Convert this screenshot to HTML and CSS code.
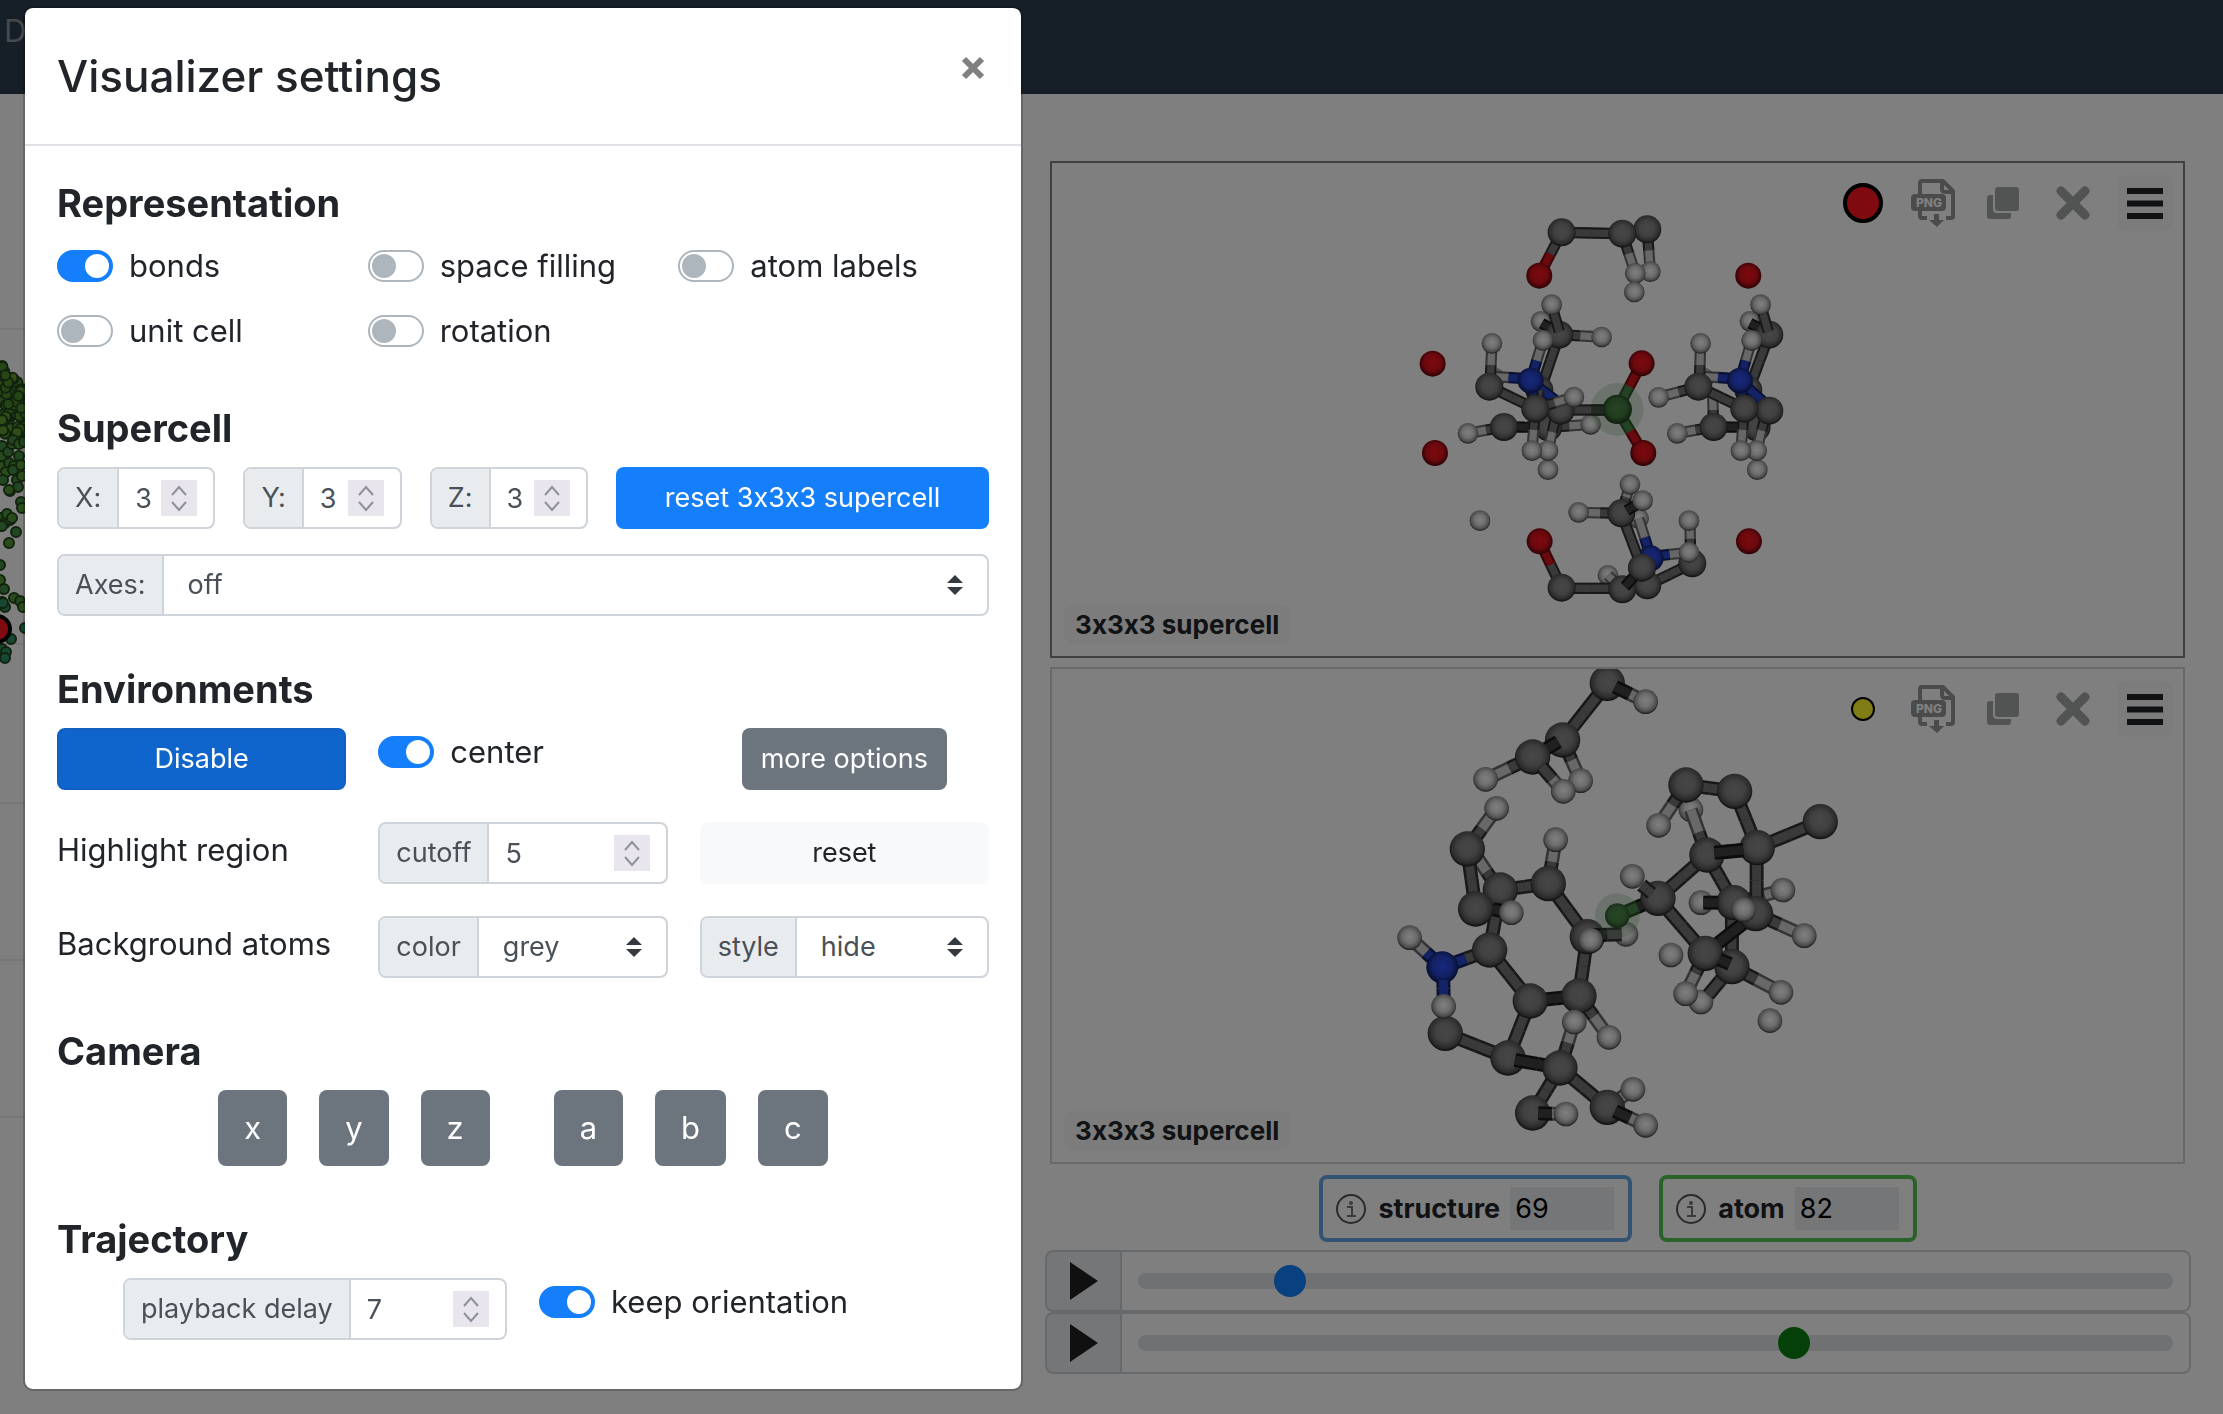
FILE: index.html
```html
<!DOCTYPE html>
<html lang="en">
<head>
<meta charset="utf-8">
<title>Visualizer settings</title>
<link rel="stylesheet" href="styles.css">
</head>
<body>
<svg class="defs" aria-hidden="true">
  <defs>
    <radialGradient id="atom-C" cx=".5" cy=".46" r=".54"><stop offset="0" stop-color="#8e8e8e"/><stop offset=".5" stop-color="#828282"/><stop offset=".82" stop-color="#585858"/><stop offset="1" stop-color="#1c1c1c"/></radialGradient>
    <radialGradient id="atom-H" cx=".5" cy=".46" r=".54"><stop offset="0" stop-color="#fff"/><stop offset=".5" stop-color="#dcdcdc"/><stop offset=".82" stop-color="#989898"/><stop offset="1" stop-color="#383838"/></radialGradient>
    <radialGradient id="atom-O" cx=".5" cy=".46" r=".54"><stop offset="0" stop-color="#f81420"/><stop offset=".6" stop-color="#d8121c"/><stop offset="1" stop-color="#540408"/></radialGradient>
    <radialGradient id="atom-N" cx=".5" cy=".46" r=".54"><stop offset="0" stop-color="#3050f8"/><stop offset=".6" stop-color="#2644cc"/><stop offset="1" stop-color="#0c1850"/></radialGradient>
    <radialGradient id="atom-G" cx=".5" cy=".46" r=".54"><stop offset="0" stop-color="#4c8a48"/><stop offset=".6" stop-color="#42783e"/><stop offset="1" stop-color="#1c381a"/></radialGradient>
    <symbol id="icon-png" viewBox="0 0 44 48">
      <path d="M9 15V4q0-2 2-2h21l10 10v25q0 2-2 2h-5M9 32v5q0 2 2 2h5M31 2v8q0 3 3 3h8" fill="none" stroke="#969696" stroke-width="4"/>
      <rect x="0" y="15" width="35" height="17" rx="4" fill="#969696"/>
      <text x="18" y="28" text-anchor="middle" class="png-text">PNG</text>
      <path d="M23 35h5v6h5l-7 7-8-7h5z" fill="#969696"/>
    </symbol>
    <symbol id="icon-copy" viewBox="0 0 32 32">
      <path d="M6 8v14q0 4 4 4h14v3q0 3-3 3H3q-3 0-3-3V11q0-3 3-3z" fill="#a2a8a6"/>
      <rect x="8" y="0" width="24" height="24" rx="3" fill="#a2a8a6"/>
    </symbol>
    <symbol id="icon-remove" viewBox="0 0 34 34">
      <path d="M5 5l24 24M29 5L5 29" stroke="#a2a8a6" stroke-width="7" stroke-linecap="square"/>
      <path d="M5 5l24 24M29 5L5 29" stroke="#a2a8a6" stroke-width="9" stroke-linecap="round"/>
    </symbol>
    <symbol id="icon-menu" viewBox="0 0 36 31">
      <path d="M0 3h36M0 15.500h36M0 28h36" stroke="#212529" stroke-width="6"/>
    </symbol>
    <symbol id="icon-info" viewBox="0 0 30 30">
      <circle cx="15" cy="15" r="14" fill="none" stroke="#555" stroke-width="2"/>
      <path d="M11 13h5v9M11 22h9" fill="none" stroke="#777" stroke-width="2"/>
      <circle cx="15" cy="9" r="2" fill="#777"/>
    </symbol>
    <symbol id="icon-play" viewBox="0 0 28 38"><path d="M0 0l28 19L0 38z" fill="#202020"/></symbol>
    <symbol id="icon-spin" viewBox="0 0 36 36">
      <path d="M11 15l7-8 7 8M11 22l7 8 7-8" fill="none" stroke="#8f8f9d" stroke-width="2"/>
    </symbol>
  </defs>
</svg>

<nav class="navbar"><a class="nav-link" href="#">D</a></nav>

<main class="page">
  <section class="map" aria-label="Map">
    <svg class="map-plot" id="map"></svg>
  </section>

  <section class="explorer">
    <div class="viewers">
      <div class="viewer is-active">
        <svg class="canvas" id="mol-1" viewBox="0 0 1131 493" preserveAspectRatio="xMidYMid meet"></svg>
        <div class="tools">
          <span class="marker-slot"><span class="marker marker-big"></span></span>
          <button class="tool" aria-label="Save as PNG"><svg width="44" height="48"><use href="#icon-png"/></svg></button>
          <button class="tool" aria-label="Duplicate"><svg width="32" height="32"><use href="#icon-copy"/></svg></button>
          <button class="tool" aria-label="Remove"><svg width="34" height="34"><use href="#icon-remove"/></svg></button>
          <button class="tool tool-menu" aria-label="Settings"><svg width="36" height="31"><use href="#icon-menu"/></svg></button>
        </div>
        <span class="cell-badge">3x3x3 supercell</span>
      </div>
      <div class="viewer">
        <svg class="canvas" id="mol-2" viewBox="0 0 1131 493" preserveAspectRatio="xMidYMid meet"></svg>
        <div class="tools">
          <span class="marker-slot"><span class="marker marker-small"></span></span>
          <button class="tool" aria-label="Save as PNG"><svg width="44" height="48"><use href="#icon-png"/></svg></button>
          <button class="tool" aria-label="Duplicate"><svg width="32" height="32"><use href="#icon-copy"/></svg></button>
          <button class="tool" aria-label="Remove"><svg width="34" height="34"><use href="#icon-remove"/></svg></button>
          <button class="tool tool-menu" aria-label="Settings"><svg width="36" height="31"><use href="#icon-menu"/></svg></button>
        </div>
        <span class="cell-badge">3x3x3 supercell</span>
      </div>
    </div>

    <div class="infos">
      <div class="info info-structure">
        <svg width="30" height="30"><use href="#icon-info"/></svg>
        <label for="structure">structure</label>
        <input id="structure" type="text" value="69">
      </div>
      <div class="info info-atom">
        <svg width="30" height="30"><use href="#icon-info"/></svg>
        <label for="atom">atom</label>
        <input id="atom" type="text" value="82">
      </div>
    </div>

    <div class="players">
      <div class="player">
        <button class="play" aria-label="Play structures"><svg width="28" height="38"><use href="#icon-play"/></svg></button>
        <div class="track"><input class="range range-structure" type="range" min="0" max="1000" value="136" aria-label="Structure"></div>
      </div>
      <div class="player">
        <button class="play" aria-label="Play atoms"><svg width="28" height="38"><use href="#icon-play"/></svg></button>
        <div class="track"><input class="range range-atom" type="range" min="0" max="1000" value="638" aria-label="Atom"></div>
      </div>
    </div>
  </section>
</main>

<div class="backdrop">
  <div class="modal" role="dialog" aria-labelledby="modal-title">
    <header class="modal-header">
      <h4 class="modal-title" id="modal-title">Visualizer settings</h4>
      <button class="close" aria-label="Close"><svg width="24" height="24" viewBox="0 0 24 24"><path d="M3 3l18 18M21 3L3 21" stroke="#7f7f7f" stroke-width="6"/></svg></button>
    </header>
    <div class="modal-body">
      <section class="group">
        <h5 class="heading">Representation</h5>
        <div class="switches">
          <label class="switch"><input type="checkbox" checked>bonds</label>
          <label class="switch"><input type="checkbox">space filling</label>
          <label class="switch"><input type="checkbox">atom labels</label>
          <label class="switch"><input type="checkbox">unit cell</label>
          <label class="switch"><input type="checkbox">rotation</label>
        </div>
      </section>

      <section class="group">
        <h5 class="heading">Supercell</h5>
        <div class="supercell">
          <div class="field"><label class="addon" for="sx">X:</label><input class="number" id="sx" type="number" value="3"><svg class="spin" width="36" height="36"><use href="#icon-spin"/></svg></div>
          <div class="field"><label class="addon" for="sy">Y:</label><input class="number" id="sy" type="number" value="3"><svg class="spin" width="36" height="36"><use href="#icon-spin"/></svg></div>
          <div class="field"><label class="addon" for="sz">Z:</label><input class="number" id="sz" type="number" value="3"><svg class="spin" width="36" height="36"><use href="#icon-spin"/></svg></div>
          <button class="btn btn-primary reset-cell">reset 3x3x3 supercell</button>
        </div>
        <div class="field axes"><label class="addon" for="axes">Axes:</label><select class="select" id="axes"><option>off</option></select></div>
      </section>

      <section class="group">
        <h5 class="heading">Environments</h5>
        <div class="environments">
          <button class="btn btn-active">Disable</button>
          <label class="switch"><input type="checkbox" checked>center</label>
          <button class="btn btn-secondary more">more options</button>
          <span class="row-label">Highlight region</span>
          <div class="field"><label class="addon" for="cutoff">cutoff</label><input class="number" id="cutoff" type="number" value="5"><svg class="spin" width="36" height="36"><use href="#icon-spin"/></svg></div>
          <button class="btn btn-light">reset</button>
          <span class="row-label">Background atoms</span>
          <div class="field"><label class="addon" for="color">color</label><select class="select" id="color"><option>grey</option></select></div>
          <div class="field"><label class="addon" for="style">style</label><select class="select" id="style"><option>hide</option></select></div>
        </div>
      </section>

      <section class="group">
        <h5 class="heading">Camera</h5>
        <div class="camera">
          <div class="axis-set"><button class="axis">x</button><button class="axis">y</button><button class="axis">z</button></div>
          <div class="axis-set"><button class="axis">a</button><button class="axis">b</button><button class="axis">c</button></div>
        </div>
      </section>

      <section class="group">
        <h5 class="heading">Trajectory</h5>
        <div class="trajectory">
          <div class="field playback"><label class="addon" for="delay">playback delay</label><input class="number" id="delay" type="number" value="7"><svg class="spin" width="36" height="36"><use href="#icon-spin"/></svg></div>
          <label class="switch"><input type="checkbox" checked>keep orientation</label>
        </div>
      </section>
    </div>
  </div>
</div>
<script src="scene.js"></script>
</body>
</html>
```
FILE: styles.css
```css
*, *::before, *::after { box-sizing: border-box; }

body {
  margin: 0;
  background: #fff;
  color: #212529;
  font-family: Inter, "Liberation Sans", sans-serif;
  font-size: 31px;
  font-feature-settings: "calt" 0;
  line-height: 48px;
}

button, input, select { font: inherit; font-feature-settings: inherit; color: inherit; margin: 0; }
button { cursor: pointer; border: 0; padding: 0; background: none; }
svg { display: block; flex: none; }
.defs { position: absolute; width: 0; height: 0; }
.png-text { font: 800 12px Inter, sans-serif; fill: #fff; }

.navbar { height: 94px; padding: 7px 4px; background: #2c3e50; }
.nav-link { color: #8e9296; text-decoration: none; }

.page {
  display: grid;
  grid-template-columns: 47.7% 1fr;
  padding-right: 32px;
}
.map { min-width: 0; overflow: hidden; }
.map-plot { width: 100%; height: 1320px; }

/* Structure viewers */
.explorer { padding-top: 67px; min-width: 0; }
.viewers { display: grid; gap: 9px; margin: 0 6px 0 5px; }
.viewer { position: relative; height: 497px; border: 2px solid #d3d3d3; overflow: hidden; }
.viewer.is-active { border-color: #808080; }
.canvas { width: 100%; height: 100%; }
.tools {
  position: absolute;
  top: 12px;
  right: 10px;
  display: flex;
  align-items: center;
  gap: 14px;
}
.tool, .marker-slot {
  display: flex;
  align-items: center;
  justify-content: center;
  width: 56px;
  height: 56px;
  border-radius: 8px;
}
.tool-menu { background: #f8f9fa; margin-left: 2px; }
.marker { border: 4px solid #000; border-radius: 50%; }
.marker-big { width: 40px; height: 40px; background: #ff1420; }
.marker-small { width: 24px; height: 24px; border-width: 2px; background: #fffa28; }
.cell-badge {
  position: absolute;
  left: 12px;
  bottom: 12px;
  padding: 0 11px;
  border-radius: 8px;
  background: #f8f9fa;
  font-size: 26px;
  font-weight: 700;
  line-height: 39px;
}

/* Selected structure and atom */
.infos { display: flex; justify-content: center; gap: 27px; margin: 11px 0 8px; }
.info {
  display: flex;
  align-items: center;
  height: 67px;
  padding: 0 14px 0 13px;
  border: 4px solid #66a6e6;
  border-radius: 8px;
  font-size: 27px;
}
.info-atom { border-color: #52c652; }
.info label { margin: 0 10px 0 12px; font-weight: 700; }
.info input {
  width: 104px;
  height: 43px;
  padding: 0 5px;
  border: 0;
  background: #e9ecef;
  color: #000;
}

.player { display: flex; height: 62px; }
.play {
  display: flex;
  align-items: center;
  justify-content: center;
  width: 77px;
  background: #e9ecef;
  border: 2px solid #ced4da;
  border-radius: 8px 0 0 8px;
}
.track {
  flex: 1;
  display: flex;
  align-items: center;
  padding: 0 16px;
  border: 2px solid #ced4da;
  border-left: 0;
  border-radius: 0 8px 8px 0;
}
.range { appearance: none; width: 100%; height: 32px; background: none; }
.range::-webkit-slider-runnable-track { height: 16px; border-radius: 8px; background: #dee2e6; }
.range::-webkit-slider-thumb {
  appearance: none;
  width: 32px;
  height: 32px;
  margin-top: -8px;
  border-radius: 50%;
  background: #1280fe;
}
.range-atom::-webkit-slider-thumb { background: #0a8010; }

/* Settings dialog */
.backdrop { position: fixed; inset: 0; padding: 6px 23px; background: rgba(0, 0, 0, .5); }
.modal {
  max-width: 1000px;
  background: #fff;
  background-clip: padding-box;
  border: 2px solid rgba(0, 0, 0, .2);
  border-radius: 10px;
}
.modal-header {
  display: flex;
  justify-content: space-between;
  padding: 24px 32px;
  border-bottom: 2px solid #dee2e6;
}
.modal-title { margin: 0; font-size: 44px; font-weight: 500; line-height: 88px; }
.close { display: flex; align-items: center; height: 72px; padding: 0 4px; }
.modal-body { display: flex; flex-direction: column; gap: 49px; padding: 33px 32px 49px; }
.group { display: flex; flex-direction: column; gap: 15px; }
.heading { margin: 0; font-size: 38px; font-weight: 700; line-height: 48px; }

.switches { display: grid; grid-template-columns: repeat(3, 1fr); row-gap: 17px; }
.switch { display: flex; align-items: center; gap: 16px; height: 48px; }
.switch input {
  appearance: none;
  flex: none;
  width: 56px;
  height: 32px;
  padding: 2px;
  background: #fff;
  border: 2px solid #adb5bd;
  border-radius: 16px;
}
.switch input::before {
  content: "";
  display: block;
  width: 24px;
  height: 24px;
  border-radius: 50%;
  background: #adb5bd;
}
.switch input:checked { background: #147efb; border-color: #147efb; }
.switch input:checked::before { background: #fff; margin-left: auto; }

.field, .btn { height: 62px; border-radius: 8px; font-size: 27px; }
.field {
  display: flex;
  align-items: center;
  min-width: 0;
  border: 2px solid #ced4da;
  color: #495057;
  background: #fff;
}
.addon {
  flex: none;
  align-self: stretch;
  padding: 0 16px;
  background: #e9ecef;
  border-right: 2px solid #ced4da;
  border-radius: 6px 0 0 6px;
  line-height: 58px;
}
.number {
  flex: 1;
  min-width: 0;
  height: 58px;
  padding: 0 0 0 16px;
  border: 0;
  background: none;
  appearance: textfield;
}
.number::-webkit-inner-spin-button { appearance: none; margin: 0; }
.spin { margin-right: 16px; background: #e8e6ec; }
.select {
  appearance: none;
  flex: 1;
  min-width: 0;
  height: 58px;
  padding: 0 24px;
  border: 0;
  border-radius: 0 6px 6px 0;
  background: url("data:image/svg+xml,%3Csvg xmlns='http://www.w3.org/2000/svg' viewBox='0 0 16 20'%3E%3Cpath d='M0 8L8 0l8 8zM0 12l8 8 8-8z' fill='%23343a40'/%3E%3C/svg%3E") no-repeat right 24px center / 16px 20px;
}
.btn { border: 2px solid transparent; color: #fff; }
.btn-primary { background: #147efb; }
.btn-active { background: #1065cc; border-color: #0f60c0; }
.btn-secondary { background: #6c757d; }
.btn-light { background: #f8f9fa; color: #212529; }

.supercell { display: grid; grid-template-columns: repeat(5, 1fr); margin-bottom: 10px; }
.supercell .field { margin-right: 28px; }
.reset-cell { grid-column: span 2; }

.environments { display: grid; grid-template-columns: repeat(3, 1fr); gap: 32px; }
.more { justify-self: center; padding: 0 17px; }
.row-label { line-height: 56px; white-space: nowrap; }

.camera { display: flex; justify-content: center; gap: 64px; }
.axis-set { display: flex; gap: 32px; }
.axis { height: 76px; padding: 0 26px; border-radius: 8px; background: #6c757d; color: #fff; }

.trajectory { display: flex; gap: 32px; padding-left: 66px; }
.playback { width: 384px; }
```
FILE: scene.js
```js
const NS = "http://www.w3.org/2000/svg";

function add(parent, tag, attrs) {
  const node = document.createElementNS(NS, tag);
  for (const key in attrs) node.setAttribute(key, attrs[key]);
  parent.appendChild(node);
  return node;
}

const BOND = {
  C: ["#303030", "#747474"], D: ["#181818", "#404040"], H: ["#686868", "#d0d0d0"],
  O: ["#700810", "#d4121c"], N: ["#142468", "#2844cc"], G: ["#1e3c1c", "#44803f"]
};

// Draws back to front: [element, x, y] is an atom,
// [colour pair, x1, y1, x2, y2] a bond, ["halo", x, y, r] the highlight.
function draw(id, dy, radius, width, items) {
  const g = add(document.getElementById(id), "g", { transform: `translate(328 ${dy}) scale(.33333)` });
  for (const [kind, x1, y1, x2, y2] of items) {
    if (kind === "halo") {
      add(g, "circle", { cx: x1, cy: y1, r: x2, fill: "#5a9a5a", "fill-opacity": .24 });
    } else if (y2 === undefined) {
      add(g, "circle", { cx: x1, cy: y1, r: x2 || radius[kind], fill: `url(#atom-${kind})` });
    } else {
      const mx = (x1 + x2) / 2, my = (y1 + y2) / 2;
      [[kind[0], x1, y1, mx, my], [kind[1], mx, my, x2, y2]].forEach(([c, a, b, d, e]) => {
        [[0, width], [1, width * .64]].forEach(([tone, w]) =>
          add(g, "path", { d: `M${a} ${b}L${d} ${e}`, stroke: BOND[c][tone], "stroke-width": w }));
      });
    }
  }
}

draw("mol-1", 17, { C: 42, H: 31, O: 39, N: 39, G: 44 }, 34, [
  ["CO", 545, 157, 478, 287], ["CC", 545, 157, 727, 161], ["CH", 802, 148, 811, 275], ["H", 811, 275], ["C", 802, 148],
  ["CH", 727, 161, 766, 280], ["H", 766, 280], ["C", 727, 161], ["C", 545, 157], ["O", 478, 287], ["H", 763, 336],
  ["O", 1105, 287], ["O", 158, 551], ["O", 165, 819], ["O", 1107, 1084], ["H", 300, 1022],

  ["H", 483, 424], ["DD", 485, 430, 530, 455], ["H", 345, 595], ["HN", 320, 588, 452, 597],
  ["CC", 538, 464, 485, 620], ["CH", 538, 464, 665, 471], ["H", 665, 471], ["C", 538, 464],
  ["CC", 538, 455, 515, 374], ["H", 515, 374], ["C", 478, 630], ["NN", 452, 602, 525, 660],
  ["CC", 466, 686, 478, 630], ["DD", 372, 741, 505, 742], ["CH", 505, 742, 632, 733], ["H", 632, 733], ["C", 505, 742],
  ["CH", 372, 741, 264, 760], ["C", 372, 741], ["H", 264, 760],
  ["CC", 542, 690, 712, 690], ["CH", 530, 700, 504, 812], ["C", 542, 692], ["H", 504, 869], ["H", 504, 812],
  ["CH", 466, 686, 582, 651], ["H", 582, 651], ["CH", 466, 686, 456, 812], ["H", 456, 812],
  ["CC", 328, 620, 466, 686], ["ND", 452, 602, 466, 686], ["NH", 452, 602, 489, 481], ["H", 489, 481], ["N", 452, 602],
  ["C", 466, 686], ["CH", 330, 620, 336, 490], ["C", 328, 620], ["H", 336, 490],

  ["H", 1110, 424], ["DD", 1110, 430, 1160, 455], ["H", 972, 595], ["HN", 948, 588, 1080, 597],
  ["CC", 1168, 464, 1110, 620], ["C", 1168, 464], ["CC", 1165, 455, 1142, 374], ["H", 1142, 374],
  ["C", 1105, 630], ["NN", 1080, 602, 1150, 665], ["HC", 998, 640, 1001, 741], ["DD", 1001, 741, 1130, 742],
  ["C", 1130, 742], ["CH", 1001, 741, 892, 760], ["C", 1001, 741], ["H", 892, 760],
  ["CH", 1160, 692, 1130, 812], ["C", 1168, 692], ["H", 1132, 869], ["H", 1130, 812],
  ["CH", 1093, 686, 1083, 812], ["H", 1083, 812], ["CC", 955, 620, 1093, 686], ["ND", 1080, 602, 1093, 686],
  ["NH", 1080, 602, 1115, 481], ["H", 1115, 481], ["N", 1080, 602], ["C", 1093, 686],
  ["CH", 955, 620, 836, 652], ["CH", 958, 620, 962, 490], ["C", 955, 620], ["H", 962, 490], ["H", 836, 652],

  ["DD", 635, 690, 690, 690], ["GO", 712, 688, 785, 550], ["GO", 712, 688, 790, 819], ["O", 785, 550], ["O", 790, 819],
  ["halo", 712, 688, 79], ["G", 712, 688],

  ["H", 776, 1015], ["HN", 776, 1015, 812, 1130], ["H", 684, 1186], ["CH", 727, 1228, 684, 1186],
  ["CC", 802, 1216, 937, 1150], ["C", 802, 1216], ["C", 937, 1150], ["CH", 932, 1130, 930, 1022], ["H", 927, 1022],
  ["CO", 545, 1223, 479, 1084], ["CC", 545, 1225, 727, 1225], ["C", 545, 1223], ["O", 479, 1084],
  ["C", 727, 1228], ["DD", 735, 1220, 786, 1163], ["NH", 812, 1130, 927, 1117], ["N", 812, 1135], ["H", 927, 1117],
  ["CC", 724, 1000, 786, 1163], ["C", 786, 1163], ["CH", 724, 1000, 596, 997], ["H", 596, 997],
  ["CH", 728, 990, 750, 913], ["H", 750, 913], ["C", 724, 1000], ["DD", 740, 992, 780, 968], ["H", 788, 962]
]);

draw("mol-2", -19, { C: 53, H: 37, N: 48, G: 37 }, 42, [
  ["CC", 548, 270, 682, 100], ["C", 682, 100], ["DH", 705, 110, 797, 155], ["H", 797, 155],
  ["CH", 548, 270, 602, 392], ["H", 602, 392], ["C", 548, 270], ["DD", 458, 321, 535, 275],
  ["CH", 458, 321, 317, 388], ["C", 458, 321], ["H", 317, 388], ["CH", 485, 350, 550, 424], ["H", 550, 424],

  ["HC", 290, 620, 350, 710], ["CC", 361, 720, 329, 900], ["CC", 361, 720, 505, 701], ["C", 361, 720],
  ["CH", 505, 701, 527, 569], ["H", 527, 569], ["CC", 505, 701, 622, 860], ["C", 505, 701],
  ["CC", 262, 597, 287, 777], ["CH", 262, 597, 350, 475], ["H", 350, 475], ["C", 262, 597],
  ["C", 287, 777], ["DH", 340, 778, 394, 788], ["H", 394, 788],
  ["H", 738, 853], ["CC", 622, 860, 597, 1038], ["C", 622, 860], ["DC", 640, 856, 725, 853], ["H", 632, 871],
  ["CC", 329, 900, 451, 1053], ["NC", 187, 952, 329, 900], ["C", 329, 900],
  ["NH", 187, 952, 89, 863], ["H", 89, 863], ["N", 187, 952],
  ["CC", 196, 1150, 384, 1224], ["C", 196, 1150], ["NN", 190, 990, 191, 1040], ["H", 191, 1069],
  ["DD", 451, 1053, 597, 1038], ["CC", 451, 1053, 384, 1224], ["C", 451, 1053],
  ["CH", 597, 1038, 687, 1162], ["C", 597, 1038], ["H", 687, 1162],
  ["C", 384, 1224], ["DD", 405, 1230, 540, 1254], ["CC", 540, 1254, 458, 1389], ["CC", 540, 1254, 682, 1372],
  ["CH", 545, 1240, 583, 1116], ["C", 540, 1254], ["H", 583, 1116],
  ["C", 458, 1389], ["DH", 475, 1390, 558, 1392], ["H", 558, 1392],
  ["CH", 682, 1372, 759, 1318], ["H", 759, 1318], ["C", 682, 1372], ["DH", 705, 1383, 797, 1426], ["H", 797, 1426],

  ["H", 933, 479], ["HC", 933, 479, 981, 615], ["CC", 918, 405, 1064, 424], ["CC", 1064, 424, 1132, 593],
  ["CH", 918, 405, 836, 526], ["H", 836, 526], ["C", 1064, 424], ["C", 918, 405],
  ["CC", 1132, 593, 1321, 515], ["C", 1321, 515],
  ["CH", 1100, 750, 1209, 720], ["H", 1209, 720], ["CC", 981, 615, 1062, 758], ["CC", 1056, 758, 1056, 950],
  ["C", 1062, 758], ["H", 963, 758], ["DD", 970, 758, 1015, 758],
  ["CC", 1130, 593, 1130, 791], ["DD", 1000, 610, 1120, 598], ["C", 1132, 593],
  ["CC", 834, 745, 981, 615], ["C", 981, 615], ["DD", 1003, 608, 1090, 600],
  ["CC", 834, 745, 976, 910], ["CH", 1127, 791, 1273, 857], ["H", 1273, 857],
  ["DD", 976, 910, 1127, 791], ["C", 1127, 791], ["H", 1091, 779],
  ["CH", 1056, 950, 1203, 1027], ["H", 1203, 1027], ["H", 963, 1056], ["CC", 1056, 950, 985, 1035], ["C", 1056, 950],
  ["CH", 976, 910, 917, 1031], ["C", 976, 910], ["DD", 1018, 928, 1050, 942], ["H", 917, 1031],
  ["GD", 712, 797, 834, 745], ["C", 834, 745], ["CC", 815, 730, 785, 705], ["H", 757, 679],
  ["G", 712, 797], ["halo", 712, 797, 67], ["H", 873, 915], ["H", 1170, 1112]
]);

// Map: grid lines and the scatter of environments.
const map = document.getElementById("map");
[235, 550, 709, 866, 1023].forEach(y => add(map, "path", { d: `M0 ${y}H900`, stroke: "#eee", "stroke-width": 2 }));
const dot = (x, y, fill) => add(map, "circle", { cx: x, cy: y - 94, r: 5, fill, stroke: "#24461a", "stroke-width": 2 });
let seed = 7;
const random = () => (seed = seed * 16807 % 2147483647) / 2147483647;
for (let i = 0; i < 110; i++) {
  const x = random() * 28, y = 366 + random() * 70;
  if (y > 362 + x * 1.1) dot(x, y, i % 3 ? "#4e8c2c" : "#629c34");
}
[[2, 446], [2, 456], [8, 452], [12, 444], [13, 440], [19, 444], [24, 442], [3, 466], [9, 463], [14, 466], [19, 456],
 [6, 472], [13, 470], [21, 465], [3, 480], [10, 491], [17, 480], [22, 476], [18, 487], [9, 490], [21, 502], [22, 508],
 [1, 518], [5, 523], [10, 520], [7, 514], [2, 526], [12, 518], [16, 532], [9, 543], [0, 565], [0, 580], [4, 589],
 [14, 598], [20, 601], [23, 607]].forEach(([x, y], i) => dot(x, y, i % 2 ? "#54983a" : "#428c42"));
[[2, 602], [5, 607], [3, 603], [25, 628], [11, 639], [2, 649], [6, 652], [5, 658]].forEach(([x, y]) => dot(x, y, "#2c9068"));
add(map, "circle", { cx: -3, cy: 535, r: 13, fill: "#ff1420", stroke: "#000", "stroke-width": 4 });
```
